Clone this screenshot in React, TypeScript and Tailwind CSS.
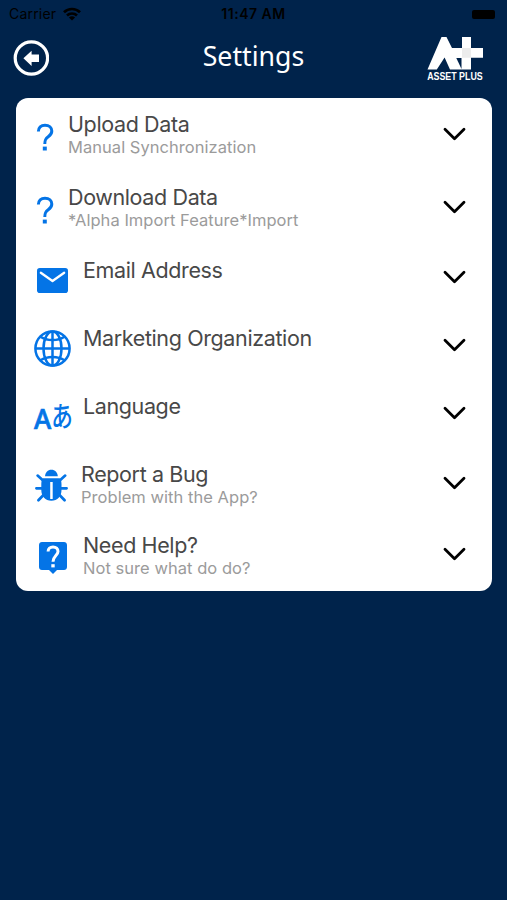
import React from 'react';

interface SettingItem {
    id: string;
    title: string;
    sub?: string;
    icon: React.ReactNode;
    rowClass: string;
    iconClass: string;
    chevronClass: string;
}

const QuestionIcon = () => (
    <svg className="ml-[19px] mt-[25px] h-7 w-[20px] shrink-0" viewBox="0 0 20 28" fill="none">
        <path d="M3.4 8.6C3.4 4.6 6 2.2 10 2.2C14.2 2.2 16.8 4.5 16.8 8.1C16.8 10.8 15.5 12.2 13.2 13.8C10.5 15.7 9.8 16.9 9.8 21" stroke="#0474e6" strokeWidth="3" />
        <path d="M7.8 23.6H11.8V27.5H7.8Z" fill="#0474e6" />
    </svg>
);

const MailIcon = () => (
    <svg className="ml-[21px] mt-6 h-[25px] w-[31px] shrink-0" viewBox="0 0 31 25" fill="none">
        <rect width="31" height="25" rx="2.8" fill="#0474e6" />
        <path d="M3.8 4.8L15.5 13L27.2 4.8" stroke="#fff" strokeWidth="2.3" strokeLinecap="round" strokeLinejoin="round" />
    </svg>
);

const GlobeIcon = () => (
    <svg className="ml-[18px] mt-[18px] h-[37px] w-[37px] shrink-0" viewBox="0 0 37 37" fill="none" stroke="#0474e6" strokeWidth="2.5">
        <circle cx="18.5" cy="18.5" r="17.1" />
        <ellipse cx="18.5" cy="18.5" rx="9" ry="17.1" />
        <path d="M18.5 1.5V35.5M1.5 18.5H35.5" />
        <path d="M6.5 6.8C13 11.2 24 11.2 30.5 6.8M6.5 30.2C13 25.8 24 25.8 30.5 30.2" />
    </svg>
);

const LanguageIcon = () => (
    <svg className="ml-[14px] mt-[8px] h-[52px] w-[46px] shrink-0 overflow-visible" viewBox="-4 -10 46 52" fill="#0474e6">
        <text x="0" y="31.3" fontFamily="'Noto Sans', sans-serif" fontSize="26.5" fontWeight="500" stroke="#0474e6" strokeWidth="0.7" textLength="17.2" lengthAdjust="spacingAndGlyphs">A</text>
        <text x="17.2" y="28.8" fontFamily="'Noto Sans CJK JP', sans-serif" fontSize="28.5" fontWeight="500" textLength="21.6" lengthAdjust="spacingAndGlyphs">あ</text>
    </svg>
);

const BugIcon = () => (
    <svg className="ml-[19px] mt-[21px] h-[34px] w-[34px] shrink-0" viewBox="0 0 34 34">
        <path d="M10 7.3C10.4 3.2 12.8 0.8 16.4 0.8C20 0.8 22.4 3.2 22.8 7.3Z" fill="#0474e6" />
        <path fillRule="evenodd" d="M8.2 9.2H24.6C26 10.4 26.5 12.4 26.5 15V21C26.5 27 22.5 31.8 16.4 31.8C10.3 31.8 6.3 27 6.3 21V15C6.3 12.4 6.8 10.4 8.2 9.2ZM15.2 13V30H17.7V13Z" fill="#0474e6" />
        <path d="M2.6 6.6L8.6 12M30.2 6.6L24.2 12M1.4 19.3H8M25 19.3H31.6M9 25.5L3.4 31.3M24 25.5L29.6 31.3" stroke="#0474e6" strokeWidth="2.7" strokeLinecap="round" />
    </svg>
);

const HelpIcon = () => (
    <svg className="ml-[23px] mt-[23px] h-8 w-7 shrink-0" viewBox="0 0 28 32" fill="none">
        <path d="M3 0H25C26.7 0 28 1.3 28 3V25C28 26.7 26.7 28 25 28H18L14 32L10 28H3C1.3 28 0 26.7 0 25V3C0 1.3 1.3 0 3 0Z" fill="#0474e6" />
        <path d="M9.1 9.6C9.1 6.8 11.2 4.9 14 4.9C17 4.9 19 6.8 19 9.5C19 13.3 14 14 14 19.8" stroke="#fff" strokeWidth="3" />
        <path d="M12.3 22.2H15.7V25.4H12.3Z" fill="#fff" />
    </svg>
);

const settings: SettingItem[] = [
    { id: 'upload', title: 'Upload Data', sub: 'Manual Synchronization', icon: <QuestionIcon />, rowClass: 'h-[73px]', iconClass: 'w-[52px]', chevronClass: 'mt-[29px]' },
    { id: 'download', title: 'Download Data', sub: '*Alpha Import Feature*Import', icon: <QuestionIcon />, rowClass: 'h-[73px]', iconClass: 'w-[52px]', chevronClass: 'mt-[29px]' },
    { id: 'email', title: 'Email Address', icon: <MailIcon />, rowClass: 'h-[68px]', iconClass: 'w-[67px]', chevronClass: 'mt-[26px]' },
    { id: 'marketing', title: 'Marketing Organization', icon: <GlobeIcon />, rowClass: 'h-[68px]', iconClass: 'w-[67px]', chevronClass: 'mt-[26px]' },
    { id: 'language', title: 'Language', icon: <LanguageIcon />, rowClass: 'h-[68px]', iconClass: 'w-[67px]', chevronClass: 'mt-[26px]' },
    { id: 'bug', title: 'Report a Bug', sub: 'Problem with the App?', icon: <BugIcon />, rowClass: 'h-[71px]', iconClass: 'w-[65px]', chevronClass: 'mt-[28px]' },
    { id: 'help', title: 'Need Help?', sub: 'Not sure what do do?', icon: <HelpIcon />, rowClass: 'h-[72px]', iconClass: 'w-[67px]', chevronClass: 'mt-[28px]' },
];

const StatusBar = () => (
    <div className="grid h-7 grid-cols-3 items-center px-[9px] text-[14px] leading-none text-black">
        <div className="flex items-center gap-[7px]">
            <span className="tracking-[0.2px]">Carrier</span>
            <svg width="18" height="14" viewBox="0 0 18 14" fill="none" stroke="#000" strokeWidth="2.7">
                <path d="M1 5.2C5.4 0.9 12.6 0.9 17 5.2M4 8.5C6.8 5.8 11.2 5.8 14 8.5" />
                <path d="M9 13.5L5.9 10.4C7.6 8.9 10.4 8.9 12.1 10.4Z" fill="#000" stroke="none" />
            </svg>
        </div>
        <span className="text-center font-semibold tracking-[0.5px]">11:47 AM</span>
        <div className="mr-[3px] h-[9px] w-[23px] justify-self-end rounded-[2px] bg-black"></div>
    </div>
);

const Logo = () => (
    <svg className="h-[50px] w-[58px] overflow-visible" viewBox="0 0 58 50" fill="#fff">
        <path d="M1.5 33.5L15.5 1H20.5L26 12H36V1H45V12H57V21.8H45V33.5H24L18.6 21.5L10.8 33.5Z" />
        <path d="M30.3 22H35.5V33Z" fill="#00234b" />
        <path d="M36 12H45V21.8H36Z" fill="#ececec" />
        <text x="1.2" y="44" fontFamily="'Liberation Sans', sans-serif" fontSize="11.4" fontWeight="700" textLength="55.5" lengthAdjust="spacingAndGlyphs">ASSET PLUS</text>
    </svg>
);

const App: React.FC = () => {
    return (
        <div className="h-[900px] w-full overflow-hidden bg-[#00234b] font-['Inter',sans-serif]">
            <StatusBar />
            <header className="grid h-[70px] grid-cols-3 items-start px-[13px]">
                <button className="mt-[12px] h-9 w-9" aria-label="Back">
                    <svg width="36" height="36" viewBox="0 0 36 36" fill="none">
                        <circle cx="18.4" cy="18" r="16.2" stroke="#fff" strokeWidth="3.2" />
                        <path d="M10.4 18.3L18.6 10.7V14.6H26V22H18.6V25.9Z" fill="#fff" />
                    </svg>
                </button>
                <h1 className="mt-[10px] text-center font-['Noto_Sans',sans-serif] text-[26.7px] leading-9 text-white">Settings</h1>
                <div className="mr-[10px] mt-[8px] justify-self-end">
                    <Logo />
                </div>
            </header>

            <main className="ml-4 mr-[15px] h-[493px] rounded-xl bg-white">
                {settings.map((item) => (
                    <div key={item.id} className={`flex items-start ${item.rowClass}`}>
                        <div className={`flex shrink-0 ${item.iconClass}`}>{item.icon}</div>
                        <div className="min-w-0 flex-1 whitespace-nowrap pt-[13px]">
                            <p className="text-[21.5px] leading-[26px] tracking-[-0.38px] text-[#484848]">{item.title}</p>
                            {item.sub && <p className="text-[16.5px] leading-5 tracking-[0.04px] text-[#9b9b9b]">{item.sub}</p>}
                        </div>
                        <svg className={`mr-[26px] shrink-0 ${item.chevronClass}`} width="23" height="14" viewBox="0 0 23 14" fill="none" stroke="#000" strokeWidth="2.8" strokeLinecap="round" strokeLinejoin="round">
                            <path d="M2 2.2L11.5 11.7L21 2.2" />
                        </svg>
                    </div>
                ))}
            </main>
        </div>
    );
};

export default App;
